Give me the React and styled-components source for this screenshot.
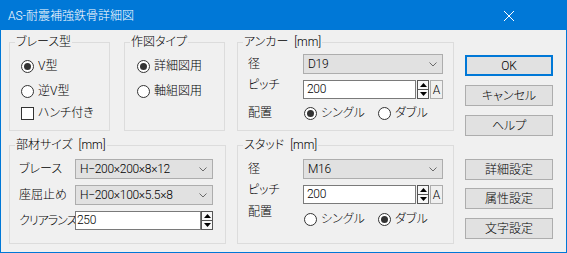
import React from "react";
import styled, { createGlobalStyle } from "styled-components";

const Global = createGlobalStyle`
  html, body { margin: 0; padding: 0; background: #f0f0f0; }
  body {
    font-family: "Roboto", "Noto Sans CJK JP", sans-serif;
    font-size: 12px;
    font-weight: 300;
    color: #000;
    font-feature-settings: "palt";
  }
  * { box-sizing: border-box; }
`;

const Window = styled.div`
  width: 567px;
  height: 253px;
  border: 1px solid #0078d7;
  background: #f0f0f0;
  display: flex;
  flex-direction: column;
`;

const TitleBar = styled.div`
  flex: none;
  height: 29px;
  background: #0078d7;
  color: #fff;
  display: flex;
  align-items: center;
  justify-content: space-between;
  padding: 0 52px 0 7px;
`;

const Title = styled.span`
  font-size: 12px;
  line-height: 16px;
`;

const Body = styled.div`
  display: flex;
  gap: 11px;
  padding: 12px 0 0 8px;
`;

const Main = styled.div`
  display: flex;
  flex-direction: column;
  gap: 14px;
  width: 445px;
`;

const Row = styled.div`
  display: flex;
`;

const Group = styled.div`
  position: relative;
  width: ${(p) => p.$w}px;
  height: ${(p) => p.$h}px;
  margin-left: ${(p) => p.$ml || 0}px;
  border: 1px solid #dcdcdc;
  display: flex;
  flex-direction: column;
  padding: ${(p) => p.$pt}px ${(p) => p.$pr || 0}px 0 ${(p) => p.$pl}px;
`;

const Legend = styled.span`
  position: absolute;
  top: -9px;
  left: 5px;
  padding: 0 1px;
  background: #f0f0f0;
  line-height: 16px;
  white-space: pre;
  word-spacing: 3px;
`;

const Choice = styled.div`
  display: flex;
  align-items: center;
  gap: 4px;
  height: 16px;
  line-height: 16px;
  white-space: nowrap;
  margin-top: ${(p) => p.$mt || 0}px;
  width: ${(p) => (p.$w ? `${p.$w}px` : "auto")};
  flex: none;
`;

const Radio = styled.span`
  position: relative;
  width: 13px;
  height: 13px;
  flex: none;
  border: 1px solid #333;
  border-radius: 50%;
  background: #fff;
  &::after {
    content: "";
    display: ${(p) => (p.$on ? "block" : "none")};
    position: absolute;
    left: 2px;
    top: 2px;
    width: 7px;
    height: 7px;
    border-radius: 50%;
    background: #333;
  }
`;

const Check = styled.span`
  width: 13px;
  height: 13px;
  flex: none;
  border: 1px solid #333;
  background: #fff;
`;

const Field = styled.div`
  display: grid;
  grid-template-columns: ${(p) => p.$label}px 1fr;
  align-items: center;
  margin-top: ${(p) => p.$mt || 0}px;
`;

const Label = styled.span`
  line-height: 16px;
  white-space: nowrap;
  letter-spacing: ${(p) => p.$ls || 0}px;
  align-self: ${(p) => (p.$top !== undefined ? "start" : "center")};
  margin-top: ${(p) => p.$top || 0}px;
`;

const Combo = styled.div`
  height: 20px;
  background: #e1e1e1;
  border: 1px solid #adadad;
  display: flex;
  align-items: center;
  justify-content: space-between;
  padding: 0 5px 0 4px;
  line-height: 16px;
  white-space: nowrap;
`;

const Value = styled.span`
  letter-spacing: -0.3px;
`;

const InputRow = styled.div`
  display: flex;
  gap: ${(p) => p.$gap || 0}px;
  height: 19px;
`;

const TextBox = styled.div`
  flex: 1;
  height: 19px;
  border: 1px solid #7a7a7a;
  background: #fff;
  padding-left: ${(p) => p.$pl}px;
  line-height: 17px;
  letter-spacing: -0.3px;
`;

const Spin = styled.div`
  width: 12px;
  height: 19px;
  flex: none;
  border: 1px solid #555;
  background: #f7f7f7;
  display: flex;
  flex-direction: column;
`;

const SpinHalf = styled.div`
  flex: 1;
  display: flex;
  align-items: center;
  justify-content: center;
  border-bottom: ${(p) => (p.$top ? "1px solid #555" : "none")};
`;

const AutoButton = styled.div`
  width: 13px;
  height: 19px;
  flex: none;
  border: 1px solid #adadad;
  background: #f0f0f0;
  display: flex;
  align-items: center;
  justify-content: center;
  line-height: 16px;
`;

const RadioRow = styled.div`
  display: flex;
  align-items: center;
  padding-left: 1px;
  margin-top: ${(p) => p.$mt || 0}px;
  align-self: ${(p) => (p.$mt ? "start" : "center")};
`;

const ButtonColumn = styled.div`
  display: flex;
  flex-direction: column;
  padding-top: 13px;
`;

const Button = styled.button`
  width: 88px;
  height: 21px;
  margin: ${(p) => p.$mt || 0}px 0 0 0;
  padding: 0;
  font-family: inherit;
  font-size: 12px;
  font-weight: 300;
  font-feature-settings: "palt";
  color: #000;
  background: #e1e1e1;
  border: ${(p) => (p.$primary ? "2px solid #0078d7" : "1px solid #adadad")};
  line-height: 16px;
`;

const Chevron = () => (
  <svg width="8" height="5" viewBox="0 0 8 5">
    <polyline points="0.5,0.5 4,4 7.5,0.5" fill="none" stroke="#6a6a6a" strokeWidth="1" />
  </svg>
);

const SpinButtons = () => (
  <Spin>
    <SpinHalf $top>
      <svg width="7" height="4" viewBox="0 0 7 4">
        <polygon points="0,4 3.5,0 7,4" fill="#000" />
      </svg>
    </SpinHalf>
    <SpinHalf>
      <svg width="7" height="4" viewBox="0 0 7 4">
        <polygon points="0,0 3.5,4 7,0" fill="#000" />
      </svg>
    </SpinHalf>
  </Spin>
);

const CloseIcon = () => (
  <svg width="10" height="10" viewBox="0 0 10 10">
    <line x1="0" y1="0" x2="10" y2="10" stroke="#fff" strokeWidth="1" />
    <line x1="10" y1="0" x2="0" y2="10" stroke="#fff" strokeWidth="1" />
  </svg>
);

const ComboBox = ({ value }) => (
  <Combo>
    <Value>{value}</Value>
    <Chevron />
  </Combo>
);

const Placement = ({ single, mt }) => (
  <RadioRow $mt={mt}>
    <Choice $w={74}>
      <Radio $on={single} />
      シングル
    </Choice>
    <Choice>
      <Radio $on={!single} />
      ダブル
    </Choice>
  </RadioRow>
);

export default function App() {
  return (
    <>
      <Global />
      <Window>
        <TitleBar>
          <Title>AS-耐震補強鉄骨詳細図</Title>
          <CloseIcon />
        </TitleBar>
        <Body>
          <Main>
            <Row>
              <Group $w={101} $h={89} $pt={15} $pl={11}>
                <Legend>ブレース型</Legend>
                <Choice>
                  <Radio $on />
                  V型
                </Choice>
                <Choice $mt={9}>
                  <Radio />
                  逆V型
                </Choice>
                <Choice $mt={6}>
                  <Check />
                  ハンチ付き
                </Choice>
              </Group>
              <Group $w={101} $h={89} $ml={14} $pt={15} $pl={12}>
                <Legend>作図タイプ</Legend>
                <Choice>
                  <Radio $on />
                  詳細図用
                </Choice>
                <Choice $mt={9}>
                  <Radio />
                  軸組図用
                </Choice>
              </Group>
              <Group $w={217} $h={89} $ml={12} $pt={11} $pl={10} $pr={10}>
                <Legend>アンカー [mm]</Legend>
                <Field $label={55}>
                  <Label>径</Label>
                  <ComboBox value="D19" />
                </Field>
                <Field $label={55} $mt={6}>
                  <Label $top={-3}>ピッチ</Label>
                  <InputRow $gap={1}>
                    <TextBox $pl={3}>200</TextBox>
                    <SpinButtons />
                    <AutoButton>A</AutoButton>
                  </InputRow>
                </Field>
                <Field $label={55} $mt={6}>
                  <Label>配置</Label>
                  <Placement single />
                </Field>
              </Group>
            </Row>
            <Row>
              <Group $w={217} $h={99} $pt={13} $pl={9} $pr={12}>
                <Legend>部材サイズ [mm]</Legend>
                <Field $label={56}>
                  <Label>ブレース</Label>
                  <ComboBox value="H−200×200×8×12" />
                </Field>
                <Field $label={56} $mt={6}>
                  <Label>座屈止め</Label>
                  <ComboBox value="H−200×100×5.5×8" />
                </Field>
                <Field $label={56} $mt={6}>
                  <Label $ls={-1}>クリアランス</Label>
                  <InputRow>
                    <TextBox $pl={1}>250</TextBox>
                    <SpinButtons />
                  </InputRow>
                </Field>
              </Group>
              <Group $w={217} $h={99} $ml={11} $pt={13} $pl={10} $pr={10}>
                <Legend>スタッド [mm]</Legend>
                <Field $label={55}>
                  <Label>径</Label>
                  <ComboBox value="M16" />
                </Field>
                <Field $label={55} $mt={6}>
                  <Label $top={-3}>ピッチ</Label>
                  <InputRow $gap={1}>
                    <TextBox $pl={3}>200</TextBox>
                    <SpinButtons />
                    <AutoButton>A</AutoButton>
                  </InputRow>
                </Field>
                <Field $label={55}>
                  <Label $top={0}>配置</Label>
                  <Placement single={false} mt={7} />
                </Field>
              </Group>
            </Row>
          </Main>
          <ButtonColumn>
            <Button $primary>OK</Button>
            <Button $mt={9}>キャンセル</Button>
            <Button $mt={9}>ヘルプ</Button>
            <Button $mt={23}>詳細設定</Button>
            <Button $mt={8}>属性設定</Button>
            <Button $mt={9}>文字設定</Button>
          </ButtonColumn>
        </Body>
      </Window>
    </>
  );
}
